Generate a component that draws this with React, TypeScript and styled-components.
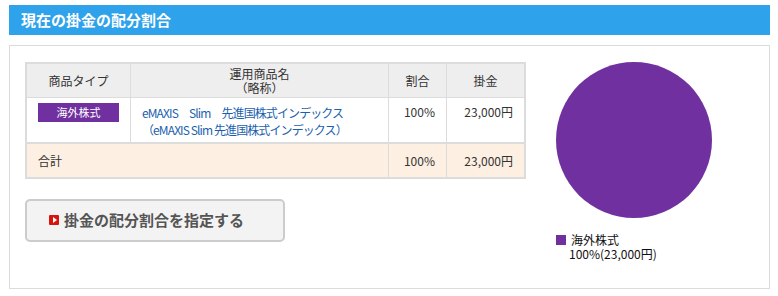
import React from "react";
import styled, { createGlobalStyle } from "styled-components";

const Global = createGlobalStyle`
  body {
    margin: 0;
    background: #fff;
    font-family: "Noto Sans CJK JP", "Noto Sans", sans-serif;
    color: #333;
  }
`;

const Page = styled.div`
  width: 761px;
  padding: 5px 0 0 9px;
`;

const TitleBar = styled.h2`
  margin: 0;
  height: 30px;
  line-height: 30px;
  padding-left: 12px;
  background: #2ea2ea;
  color: #fff;
  font-size: 15px;
  font-weight: bold;
`;

const Panel = styled.section`
  margin-top: 10px;
  height: 244px;
  border: 1px solid #dcdcdc;
  box-sizing: border-box;
  display: flex;
  padding: 16px 0 0 15px;
`;

const LeftCol = styled.div`
  width: 501px;
  display: flex;
  flex-direction: column;
  gap: 20px;
`;

const Table = styled.table`
  width: 501px;
  table-layout: fixed;
  border-collapse: collapse;
  border: 2px solid #dcdcdc;
  font-size: 12px;
  line-height: 15px;
  color: #333;
`;

const Th = styled.th<{ $w?: number }>`
  background: #eeeeee;
  font-weight: normal;
  height: 33px;
  padding: 0;
  border: 1px solid #dcdcdc;
  width: ${(p) => (p.$w ? `${p.$w}px` : "auto")};
  text-align: center;
  line-height: 14px;
`;

const Td = styled.td<{ $align?: string; $total?: boolean }>`
  border: 1px solid #dcdcdc;
  background: ${(p) => (p.$total ? "#fdefe2" : "#fff")};
  text-align: ${(p) => p.$align || "left"};
  vertical-align: ${(p) => (p.$total ? "middle" : "top")};
  padding: ${(p) => (p.$total ? "0 11px" : "6px 11px 0")};
  height: ${(p) => (p.$total ? "33px" : "38px")};
  white-space: nowrap;
`;

const TotalRow = styled.tr`
  border-top: 2px solid #dcdcdc;
`;

const Badge = styled.span`
  display: block;
  width: 81px;
  height: 19px;
  line-height: 19px;
  margin: -1px auto 0;
  background: #7030a0;
  color: #fff;
  font-size: 11px;
  text-align: center;
`;

const FundLink = styled.a`
  color: #1b5fae;
  text-decoration: none;
  font-size: 12px;
  line-height: 17px;
  letter-spacing: -0.9px;
  display: block;
`;

const ActionButton = styled.button`
  width: 260px;
  height: 43px;
  box-sizing: border-box;
  background: #f3f3f3;
  border: 2px solid #cccccc;
  border-radius: 5px;
  display: flex;
  align-items: center;
  gap: 5px;
  padding: 0 0 2px 22px;
  font-family: inherit;
  font-size: 15px;
  font-weight: bold;
  color: #555;
  cursor: pointer;
`;

const PlayIcon = styled.span`
  width: 10px;
  height: 10px;
  background: #d8140c;
  border-radius: 1px;
  display: inline-flex;
  align-items: center;
  justify-content: center;
  &::after {
    content: "";
    border-left: 4px solid #fff;
    border-top: 3px solid transparent;
    border-bottom: 3px solid transparent;
    margin-left: 1px;
  }
`;

const RightCol = styled.div`
  margin-left: 30px;
  display: flex;
  flex-direction: column;
`;

const Legend = styled.div`
  margin-top: 15px;
  display: flex;
  gap: 5px;
  font-size: 12px;
  line-height: 14px;
  color: #111;
`;

const Swatch = styled.span<{ $color: string }>`
  width: 10px;
  height: 10px;
  margin-top: 2px;
  background: ${(p) => p.$color};
  flex: none;
`;

const LegendText = styled.div`
  & > div:last-child {
    margin-left: -2px;
  }
`;

export default function App() {
  return (
    <Page>
      <Global />
      <TitleBar>現在の掛金の配分割合</TitleBar>
      <Panel>
        <LeftCol>
          <Table>
            <thead>
              <tr>
                <Th $w={103}>商品タイプ</Th>
                <Th>
                  運用商品名
                  <br />
                  （略称）
                </Th>
                <Th $w={57}>割合</Th>
                <Th $w={77}>掛金</Th>
              </tr>
            </thead>
            <tbody>
              <tr>
                <Td>
                  <Badge>海外株式</Badge>
                </Td>
                <Td>
                  <FundLink href="#">eMAXIS　Slim　先進国株式インデックス</FundLink>
                  <FundLink href="#">（eMAXIS Slim 先進国株式インデックス）</FundLink>
                </Td>
                <Td $align="right">100%</Td>
                <Td $align="right">23,000円</Td>
              </tr>
              <TotalRow>
                <Td $total colSpan={2}>
                  合計
                </Td>
                <Td $total $align="right">
                  100%
                </Td>
                <Td $total $align="right">
                  23,000円
                </Td>
              </TotalRow>
            </tbody>
          </Table>
          <ActionButton>
            <PlayIcon />
            掛金の配分割合を指定する
          </ActionButton>
        </LeftCol>
        <RightCol>
          <svg width="156" height="156" viewBox="0 0 156 156">
            <circle cx="78" cy="78" r="78" fill="#7030a0" />
          </svg>
          <Legend>
            <Swatch $color="#7030a0" />
            <LegendText>
              <div>海外株式</div>
              <div>100%(23,000円)</div>
            </LegendText>
          </Legend>
        </RightCol>
      </Panel>
    </Page>
  );
}
